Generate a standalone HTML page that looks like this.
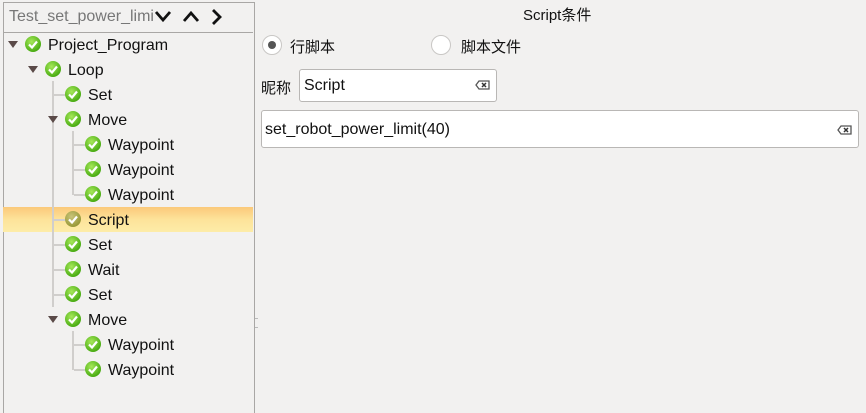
<!DOCTYPE html>
<html><head><meta charset="utf-8"><style>
body{margin:0;width:866px;height:410px;background:#f2f1f0;font-family:"Liberation Sans","Noto Sans CJK SC",sans-serif;font-size:16px;color:#111;position:relative;overflow:hidden}
.a{position:absolute}
.row{position:absolute;height:25px;line-height:25px;white-space:nowrap}
.ic{position:absolute;width:16px;height:16px;border-radius:50%;background:radial-gradient(circle at 40% 35%,#a6e85a,#4cae14 70%,#3a8f0c);}
.ic svg{position:absolute;left:0;top:0}
.tri{position:absolute;width:0;height:0;border-left:5px solid transparent;border-right:5px solid transparent;border-top:7px solid #5a4a48}
.vl{position:absolute;width:2px;background:#d0cecc}
.hl{position:absolute;height:2px;background:#d0cecc}
</style></head><body>
<div class="a" style="left:3px;top:2px;width:250px;height:410px;border-left:1px solid #a9a7a5;border-right:1px solid #a9a7a5;border-top:1px solid #a9a7a5"></div>
<div class="a" style="left:3px;top:32px;width:250px;height:1px;background:#a9a7a5"></div>
<div class="a" style="left:9px;top:8px;color:#777;font-size:16px">Test_set_power_limi</div>
<svg class="a" style="left:150px;top:7px" width="90" height="20"><g fill="none" stroke="#111" stroke-width="2.8"><path d="M6 5l7 8 7-8"/><path d="M34 14l7-8 7 8"/><path d="M63 3l7 7-7 7"/></g></svg>
<div class="a" style="left:3px;top:207px;width:250px;height:25px;background:linear-gradient(#fbc97a,#fde39a 50%,#fdeca8)"></div>
<div class="vl" style="left:52px;top:81px;height:226px"></div>
<div class="hl" style="left:54px;top:94px;width:12px"></div>
<div class="hl" style="left:54px;top:219px;width:12px"></div>
<div class="hl" style="left:54px;top:244px;width:12px"></div>
<div class="hl" style="left:54px;top:269px;width:12px"></div>
<div class="hl" style="left:54px;top:294px;width:12px"></div>
<div class="vl" style="left:72px;top:131px;height:64px"></div>
<div class="hl" style="left:74px;top:144px;width:12px"></div>
<div class="hl" style="left:74px;top:169px;width:12px"></div>
<div class="hl" style="left:74px;top:194px;width:12px"></div>
<div class="vl" style="left:72px;top:331px;height:39px"></div>
<div class="hl" style="left:74px;top:344px;width:12px"></div>
<div class="hl" style="left:74px;top:369px;width:12px"></div>
<div class="tri" style="left:8px;top:41px"></div>
<div class="tri" style="left:28px;top:66px"></div>
<div class="tri" style="left:48px;top:116px"></div>
<div class="tri" style="left:48px;top:316px"></div>
<div id="tree"></div>
<script>
var items=[[0,"Project_Program"],[1,"Loop"],[2,"Set"],[2,"Move"],[3,"Waypoint"],[3,"Waypoint"],[3,"Waypoint"],[2,"Script"],[2,"Set"],[2,"Wait"],[2,"Set"],[2,"Move"],[3,"Waypoint"],[3,"Waypoint"]];
var h="";
items.forEach(function(it,i){var c=44+25*i;var ix=25+20*it[0];var sel=it[1]=="Script";
h+='<div class="ic" style="left:'+ix+'px;top:'+(c-8)+'px;'+(sel?'background:radial-gradient(circle at 40% 35%,#c9c47a,#9a9a3a 70%,#85812c)':'')+'"><svg width="16" height="16"><path d="M4 8.5l3 3 5-6" fill="none" stroke="#fff" stroke-width="2.2"/></svg></div>';
h+='<div class="row" style="left:'+(ix+23)+'px;top:'+(c-11)+'px">'+it[1]+'</div>';});
document.getElementById("tree").innerHTML=h;
</script>
<div class="a" style="left:255px;top:318px;width:3px;height:8px;border-top:1px solid #bbb;border-bottom:1px solid #bbb"></div>
<div class="a" style="left:523px;top:4px;font-size:15px">Script条件</div>
<div class="a" style="left:262px;top:35px;width:18px;height:18px;border-radius:50%;background:#fff;border:1px solid #c9c7c5"></div>
<div class="a" style="left:268px;top:41px;width:8px;height:8px;border-radius:50%;background:#555"></div>
<div class="a" style="left:290px;top:36px;font-size:15px">行脚本</div>
<div class="a" style="left:431px;top:35px;width:18px;height:18px;border-radius:50%;background:#fff;border:1px solid #c9c7c5"></div>
<div class="a" style="left:461px;top:36px;font-size:15px">脚本文件</div>
<div class="a" style="left:261px;top:77px;font-size:15px">昵称</div>
<div class="a" style="left:299px;top:69px;width:196px;height:31px;background:#fff;border:1px solid #b9b7b5;border-radius:3px"></div>
<div class="a" style="left:304px;top:77px">Script</div>
<svg class="a" style="left:475px;top:80px" width="16" height="10"><path d="M4 1h10v8H4L1 5z" fill="none" stroke="#555" stroke-width="1.3"/><path d="M7 3l4 4M11 3l-4 4" stroke="#333" stroke-width="1.5"/></svg>
<div class="a" style="left:261px;top:110px;width:596px;height:36px;background:#fff;border:1px solid #b9b7b5;border-radius:3px"></div>
<div class="a" style="left:265px;top:121px">set_robot_power_limit(40)</div>
<svg class="a" style="left:837px;top:125px" width="16" height="10"><path d="M4 1h10v8H4L1 5z" fill="none" stroke="#555" stroke-width="1.3"/><path d="M7 3l4 4M11 3l-4 4" stroke="#333" stroke-width="1.5"/></svg>
</body></html>
